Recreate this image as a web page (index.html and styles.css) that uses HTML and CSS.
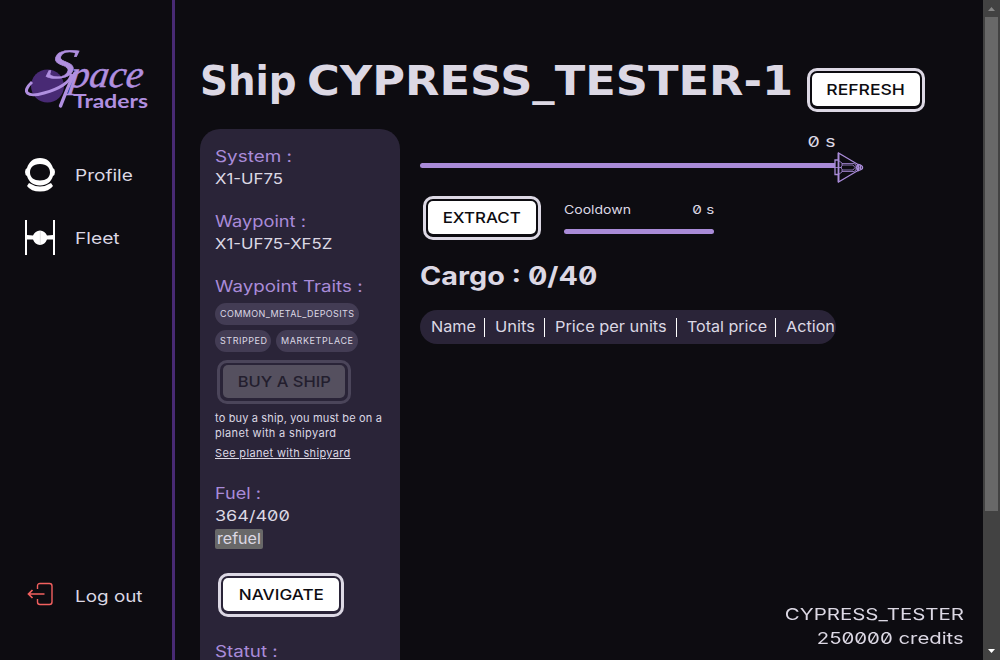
FILE: index.html
```html
<!DOCTYPE html>
<html lang="en">
<head>
<meta charset="utf-8">
<title>Space Traders</title>
<link rel="stylesheet" href="styles.css">
</head>
<body>
<aside class="sidebar">
  <svg class="logo" width="126" height="62" viewBox="0 0 126 62">
    <circle cx="22.5" cy="37" r="16.5" fill="#482a74"/>
    <path d="M7 33C-4 43 2 49 19 44C34 40 46 33 46.500 25" fill="none" stroke="#b08fe0" stroke-width="3"/>
    <text class="logo-script" transform="translate(20 29) skewX(-14) scale(1.35 1)" font-size="42">S</text>
    <text class="logo-script" transform="translate(44 37.500) skewX(-8)" font-size="38" textLength="73" lengthAdjust="spacingAndGlyphs">pace</text>
    <path d="M50 24C44 34 40 46 35.500 57" fill="none" stroke="#b08fe0" stroke-width="3.400" stroke-linecap="round"/>
    <text class="logo-name" x="48" y="58.500" textLength="75" lengthAdjust="spacingAndGlyphs">Traders</text>
  </svg>
  <nav class="menu">
    <a class="menu-item">
      <svg width="30" height="34" viewBox="0 0 30 34"><path fill="#fff" fill-rule="evenodd" d="M15 0C22 0 26 4 28 10Q30 11 30 14Q30 17 28 18C26 24 22 27.500 15 27.500S4 24 2 18Q0 17 0 14Q0 11 2 10C4 4 8 0 15 0ZM15 6C8 6 5 10 5 14.500C5 19.500 9 22.500 15 22.500S25 19.500 25 14.500C25 10 22 6 15 6Z"/><path fill="#fff" d="M4 25Q15 32 26 25L28 28Q24 33.500 15 33.500T2 28Z"/></svg>
      <span class="wide t-profile">Profile</span>
    </a>
    <a class="menu-item">
      <svg width="30" height="35" viewBox="0 0 30 35"><path fill="#fff" d="M0 0H2V15L8 15.500Q10 11 15 10.500Q20 11 22 15.500L28 15V0H30V35H28V19.500L22 19.500Q20 24.500 15 25Q10 24.500 8 19.500L2 19.500V35H0Z"/><path d="M15.300 11V25" stroke="#ccc" stroke-width=".6"/></svg>
      <span class="wide t-fleet">Fleet</span>
    </a>
  </nav>
  <a class="menu-item logout">
    <svg width="30" height="24" viewBox="0 0 30 24" fill="none" stroke="#f2605f" stroke-width="1.400"><path d="M12.500 7V4Q12.500 1.500 15 1.500H24.500Q27 1.500 27 4V20Q27 22.500 24.500 22.500H15Q12.500 22.500 12.500 20V17"/><path d="M19.500 12H3.500M7.500 8L3.500 12L7.500 16" stroke-width="1.700"/></svg>
    <span class="wide t-logout">Log out</span>
  </a>
</aside>
<main class="main">
  <header class="head">
    <h1 class="title"><span class="wide title-kind">Ship</span> <span class="wide title-name">CYPRESS_TESTER-1</span></h1>
    <button class="btn refresh"><span class="face"><span class="wide">REFRESH</span></span></button>
  </header>
  <div class="columns">
    <section class="panel">
      <div class="group">
        <h2 class="label"><span class="wide t-system">System :</span></h2>
        <p class="value"><span class="wide t-code">X1-UF75</span></p>
      </div>
      <div class="group">
        <h2 class="label"><span class="wide t-way">Waypoint :</span></h2>
        <p class="value"><span class="wide t-code">X1-UF75-XF5Z</span></p>
      </div>
      <div class="traits">
        <h2 class="label"><span class="wide t-traits">Waypoint Traits :</span></h2>
        <div class="tags"><span class="tag tag-a">COMMON_METAL_DEPOSITS</span><span class="tag tag-b">STRIPPED</span><span class="tag tag-c">MARKETPLACE</span></div>
        <button class="btn buy" disabled><span class="face"><span class="wide">BUY A SHIP</span></span></button>
        <p class="hint"><span class="t-hint">to buy a ship, you must be on a</span><br>planet with a shipyard</p>
        <a class="hint link">See planet with shipyard</a>
      </div>
      <div class="fuel">
        <h2 class="label"><span class="wide t-fuel">Fuel :</span></h2>
        <p class="value"><span class="wide t-num">364/400</span></p>
        <button class="refuel"><span class="wide">refuel</span></button>
      </div>
      <button class="btn navigate"><span class="face"><span class="wide">NAVIGATE</span></span></button>
      <h2 class="label"><span class="wide t-statut">Statut :</span></h2>
    </section>
    <section class="content">
      <p class="travel-time"><span class="wide">0 s</span></p>
      <div class="travel">
        <div class="travel-bar"></div>
        <svg class="ship" width="30" height="31" viewBox="0 0 30 31" fill="none" stroke="#a98bd8" stroke-width="1.300"><path d="M1 8H4.500V1L24 12.500Q29 13.500 28.500 15.500Q29 17.500 24 18.500L4.500 30V22.500H1Z" fill="#0d0c11"/><path d="M4.500 1V30" stroke-width="1.800"/><path d="M1 15.500H8M4.500 8.500L8 11V14L6.500 15.500L8 17V20L4.500 22.500M8 11.500H20L22 13V18L20 19.500H8M8 13H19L21 15.500L19 18H8" stroke-width=".8"/><path d="M24 12.500Q21.500 15.500 24 18.500Q25.500 15.500 24 12.500M26.500 13.500V17.500" stroke-width="1.500"/></svg>
      </div>
      <div class="actions">
        <button class="btn extract"><span class="face"><span class="wide">EXTRACT</span></span></button>
        <div class="cooldown">
          <div class="cooldown-text"><span class="wide t-cool">Cooldown</span><span class="wide t-sec">0 s</span></div>
          <div class="cooldown-bar"></div>
        </div>
      </div>
      <h2 class="cargo"><span class="wide">Cargo : 0/40</span></h2>
      <div class="table-head">
        <span class="cell c-name"><span class="wide">Name</span></span><span class="cell c-units"><span class="wide">Units</span></span><span class="cell c-price"><span class="wide">Price per units</span></span><span class="cell c-total"><span class="wide">Total price</span></span><span class="cell c-action"><span class="wide">Action</span></span>
      </div>
    </section>
  </div>
  <footer class="agent"><div><span class="wide t-agent">CYPRESS_TESTER</span></div><div><span class="wide t-credits">250000 credits</span></div></footer>
</main>
<div class="scroll">
  <svg width="17" height="17" viewBox="0 0 17 17"><path d="M8.500 7L12 11H5Z" fill="#868686"/></svg>
  <div class="thumb"></div>
  <svg class="down" width="17" height="17" viewBox="0 0 17 17"><path d="M5 6H12L8.500 10Z" fill="#fff"/></svg>
</div>
</body>
</html>
```
FILE: styles.css
```css
* { box-sizing: border-box; }
body {
  margin: 0; width: 1000px; height: 660px; overflow: hidden;
  display: grid; grid-template-columns: 175px 808px 17px; grid-template-rows: 660px;
  background: #0d0c11; color: #dcd8e4;
  font-family: Inter, "DejaVu Sans", sans-serif; font-size: 15px;
  font-feature-settings: "zero"; white-space: nowrap;
}
h1, h2, p { margin: 0; }
button { font: inherit; font-feature-settings: inherit; margin: 0; color: inherit; }

/* Extended letterforms: --k is the horizontal stretch of a label */
.wide { display: inline-block; transform: scaleX(var(--k, 1)); transform-origin: left; }

.sidebar { border-right: 3px solid #482a74; padding: 49px 0 49px 25px; display: flex; flex-direction: column; }
.logo { display: block; overflow: visible; }
.logo-script { font-family: "Liberation Serif", serif; font-style: italic; fill: #b08fe0; stroke: #b08fe0; stroke-width: .5; }
.logo-name { font-family: Lato, sans-serif; font-weight: 700; font-size: 19px; fill: #b08fe0; }
.menu { display: flex; flex-direction: column; gap: 28px; margin-top: 46px; }
.menu-item { display: flex; align-items: center; gap: 20px; height: 35px; font-size: 16px; }
.logout { margin-top: auto; }
.t-profile { --k: 1.19; }
.t-fleet { --k: 1.2; }
.t-logout { --k: 1.18; padding-top: 4px; }

.main { display: grid; grid-template-rows: 129px 531px; grid-template-columns: 808px; }
.head { display: flex; padding-left: 25px; }
.title { display: flex; width: 607px; padding-top: 57px; font: 700 40px/48px "DejaVu Sans", sans-serif; }
.title-kind { width: 107px; --k: .97; }
.title-name { --k: 1.118; }
.btn { display: block; height: 44px; padding: 2px 2px 3px; border: 3px solid #dcd8e4; border-radius: 10px; background: transparent; }
.face { display: block; height: 33px; border-radius: 5px; background: #fff; color: #0d0c11; font-weight: 500; line-height: 33px; text-align: center; }
.face .wide { transform-origin: center; }
.refresh { width: 118px; margin-top: 68px; --k: 1.17; }

.columns { display: grid; grid-template-columns: 200px 416px; column-gap: 20px; padding-left: 25px; }
.panel { height: 560px; padding: 15px 0 0 15px; border-radius: 20px 20px 0 0; background: #2a2438; }
.group { height: 65px; }
.label { font-size: 16px; font-weight: 400; line-height: 24px; height: 23px; color: #a98bd8; }
.value { height: 23px; line-height: 23px; }
.t-code { --k: 1.12; }
.t-system { --k: 1.18; }
.t-way { --k: 1.14; }
.t-traits { --k: 1.17; }
.t-fuel { --k: 1.13; }
.t-statut { --k: 1.17; }
.t-num { --k: 1.2; }
.tags { display: flex; flex-wrap: wrap; gap: 5px; width: 160px; margin-top: 6px; }
.tag { height: 22px; padding-left: 5px; border-radius: 11px; background: #433c54; font-size: 9px; line-height: 22px; }
.tag-a { width: 144px; letter-spacing: .38px; }
.tag-b { width: 56px; letter-spacing: .54px; }
.tag-c { width: 82px; letter-spacing: .59px; }
.buy { width: 134px; margin: 8px 0 0 2px; border-color: #4b455a; padding: 2px 3px 3px; --k: 1.1; }
.buy .face { background: #55505f; color: #231e2e; }
.hint { display: block; margin-top: 7px; font-size: 11px; line-height: 15px; letter-spacing: .34px; }
.t-hint { letter-spacing: .15px; }
.link { margin-top: 5px; text-decoration: underline; }
.fuel { margin-top: 20px; }
.refuel { display: block; width: 48px; height: 20px; margin-top: 2px; padding: 0 0 0 2px; border: 0; border-radius: 2px; background: #686868; line-height: 20px; text-align: left; --k: 1.07; }
.navigate { width: 126px; margin: 24px 0 22px 3px; --k: 1.14; }

.content { padding-top: 3px; }
.travel-time { height: 20px; line-height: 20px; text-align: right; --k: 1.3; }
.travel-time .wide { transform-origin: right; }
.travel { display: flex; align-items: center; height: 31px; margin-right: -30px; }
.travel-bar { width: 416px; height: 5px; border-radius: 3px 0 0 3px; background: #a98bd8; flex: none; margin-top: -4px; }
.ship { flex: none; margin-left: -2px; }
.actions { display: flex; height: 44px; margin-top: 13px; padding-left: 3px; }
.extract { width: 118px; --k: 1.125; }
.cooldown { width: 150px; margin-left: 23px; font-size: 12px; }
.cooldown-text { display: flex; justify-content: space-between; height: 33px; line-height: 27px; }
.t-cool { --k: 1.17; }
.t-sec { --k: 1.27; transform-origin: right; }
.cooldown-bar { height: 5px; border-radius: 3px; background: #a98bd8; }
.cargo { margin-top: 21px; font-size: 25px; line-height: 30px; --k: 1.15; }
.table-head { display: flex; align-items: center; height: 34px; margin-top: 19px; padding-left: 11px; border-radius: 17px; background: #2a2438; overflow: hidden; }
.cell { flex: none; line-height: 18px; height: 19px; border-right: 1.5px solid #fff; margin-right: 10px; }
.c-name { width: 54px; --k: 1.08; }
.c-units { width: 50px; --k: 1.1; }
.c-price { width: 122px; --k: 1.09; }
.c-total { width: 89px; --k: 1.07; }
.c-action { border: 0; --k: 1.08; }

.agent { position: fixed; right: 36px; bottom: 10px; font-size: 16px; line-height: 24px; text-align: right; }
.agent .wide { transform-origin: right; }
.t-agent { --k: 1.28; }
.t-credits { --k: 1.27; }

.scroll { display: flex; flex-direction: column; background: #424242; }
.thumb { width: 13px; height: 494px; margin-left: 2px; background: #686868; }
.down { margin-top: auto; }
```
